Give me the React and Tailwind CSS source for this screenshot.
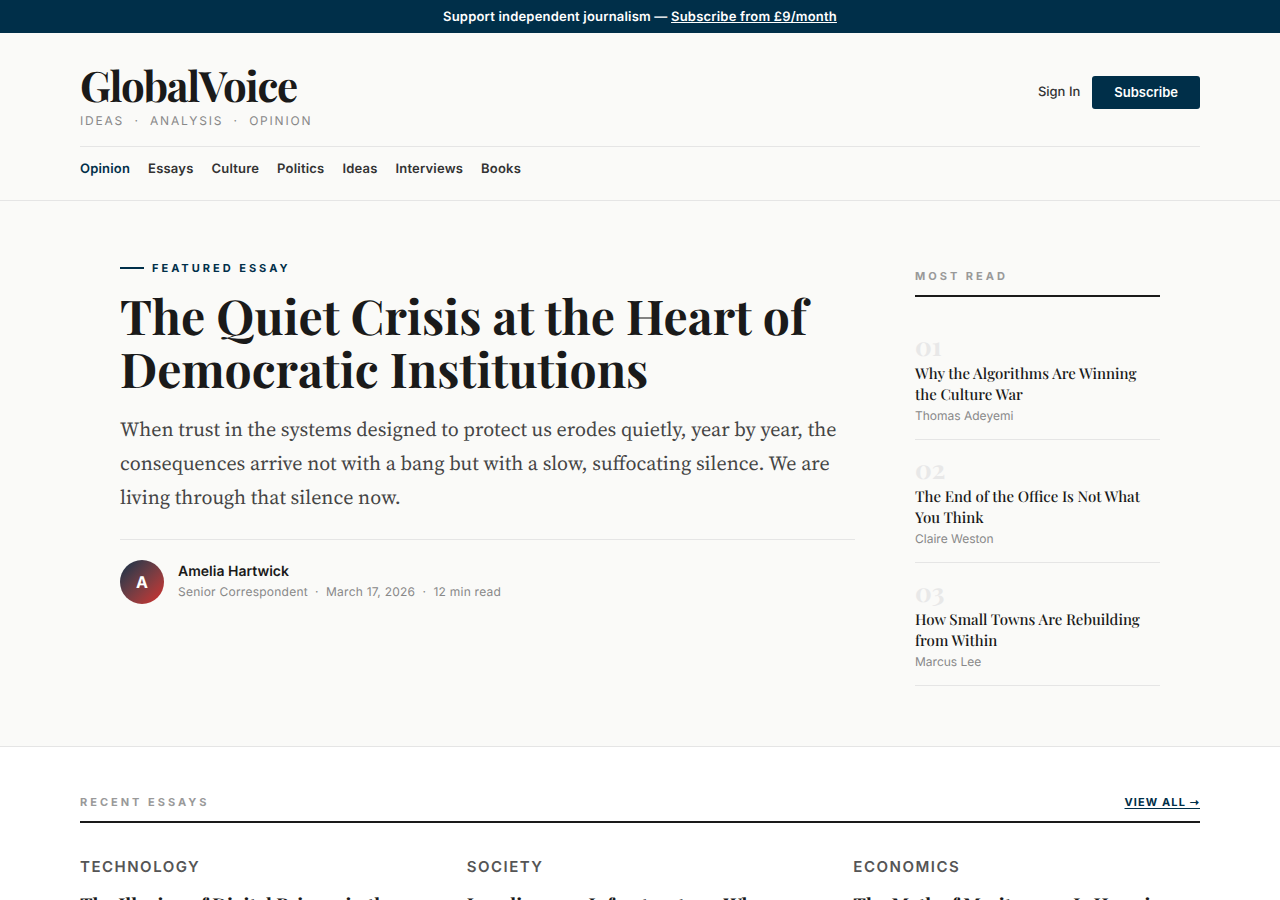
import React from "react";

const navLinks = [
  "Opinion",
  "Essays",
  "Culture",
  "Politics",
  "Ideas",
  "Interviews",
  "Books",
];

const mostRead = [
  {
    title: "Why the Algorithms Are Winning the Culture War",
    author: "Thomas Adeyemi",
  },
  {
    title: "The End of the Office Is Not What You Think",
    author: "Claire Weston",
  },
  {
    title: "How Small Towns Are Rebuilding from Within",
    author: "Marcus Lee",
  },
];

const essays = [
  {
    category: "Technology",
    title: "The Illusion of Digital Privacy in the",
  },
  {
    category: "Society",
    title: "Loneliness as Infrastructure: Who",
  },
  {
    category: "Economics",
    title: "The Myth of Meritocracy Is Harming",
  },
];

const TopBanner = () => (
  <div className="bg-[#002f49] px-5 pt-[9px] pb-[7px] text-center text-[13px] leading-[17px] font-semibold tracking-[0.015em] text-white">
    Support independent journalism —{" "}
    <a href="#subscribe" className="underline">
      Subscribe from £9/month
    </a>
  </div>
);

const Header = () => (
  <header className="border-b border-[#e5e5e5] px-20 pt-6">
    <div className="flex items-center justify-between border-b border-[#e5e5e5] pb-[18px]">
      <div>
        <a
          href="#home"
          className="block font-['Playfair_Display','Liberation_Serif',serif] text-[42px] leading-[56px] font-bold tracking-[-0.03em] text-[#1a1a1a]"
        >
          GlobalVoice
        </a>
        <p className="text-xs leading-[15px] tracking-[0.15em] text-[#888888] uppercase">
          Ideas &nbsp;·&nbsp; Analysis &nbsp;·&nbsp; Opinion
        </p>
      </div>
      <div className="flex items-center gap-3 text-[13px] leading-[17px]">
        <a href="#signin" className="font-medium text-[#333333]">
          Sign In
        </a>
        <button
          type="button"
          className="rounded-[3px] bg-[#002f49] px-[22px] py-2 font-semibold text-white"
        >
          Subscribe
        </button>
      </div>
    </div>
    <nav className="flex gap-[18px] pt-[13px] pb-[22px] text-[13px] leading-[18px] font-semibold tracking-[0.015em]">
      {navLinks.map((link, index) => (
        <a
          key={link}
          href={`#${link.toLowerCase()}`}
          className={index === 0 ? "text-[#002f49]" : "text-[#333333]"}
        >
          {link}
        </a>
      ))}
    </nav>
  </header>
);

const FeaturedEssay = () => (
  <article>
    <div className="flex items-center gap-2 text-[11px] leading-[14px] font-bold tracking-[3px] text-[#002f49] uppercase">
      <span className="h-[2px] w-6 bg-[#002f49]" />
      Featured Essay
    </div>
    <h1 className="mt-[15px] font-['Playfair_Display','Liberation_Serif',serif] text-[48px] leading-[53px] font-bold text-[#1a1a1a]">
      The Quiet Crisis at the Heart of Democratic Institutions
    </h1>
    <p className="mt-4 mb-[25px] font-['Source_Serif_4','Liberation_Serif',serif] text-[20px] leading-[34px] text-[#444444]">
      When trust in the systems designed to protect us erodes quietly, year by
      year, the consequences arrive not with a bang but with a slow, suffocating
      silence. We are living through that silence now.
    </p>
    <div className="flex items-center gap-[14px] border-t border-[#e5e5e5] pt-5">
      <div className="flex size-11 items-center justify-center rounded-full bg-linear-135 from-[#002f49] to-[#d62828] text-base font-bold text-white">
        A
      </div>
      <div>
        <p className="text-sm leading-5 font-semibold text-[#1a1a1a]">
          Amelia Hartwick
        </p>
        <p className="text-xs leading-5 tracking-[0.02em] text-[#888888]">
          Senior Correspondent &nbsp;·&nbsp; March 17, 2026 &nbsp;·&nbsp; 12 min
          read
        </p>
      </div>
    </div>
  </article>
);

const MostRead = () => (
  <aside className="pt-2">
    <h2 className="border-b-2 border-[#1a1a1a] pb-3 text-[11px] leading-[14px] font-bold tracking-[3px] text-[#999999] uppercase">
      Most Read
    </h2>
    <ol className="pt-5">
      {mostRead.map((item, index) => (
        <li key={item.author} className="border-b border-[#e5e5e5] py-4">
          <span className="mb-[5px] block font-['Playfair_Display','Liberation_Serif',serif] text-[26px] leading-[25px] font-bold text-[#e8e8e8]">
            0{index + 1}
          </span>
          <a
            href={`#most-read-${index + 1}`}
            className="block font-['Playfair_Display','Liberation_Serif',serif] text-[15px] leading-[21px] font-medium text-[#1a1a1a]"
          >
            {item.title}
          </a>
          <p className="mt-[3px] text-xs leading-[15px] text-[#888888]">
            {item.author}
          </p>
        </li>
      ))}
    </ol>
  </aside>
);

const RecentEssays = () => (
  <section className="bg-white px-20 pt-12 pb-4">
    <div className="flex items-center justify-between border-b-2 border-[#1a1a1a] pb-3 text-[11px] leading-[14px] uppercase">
      <h2 className="font-bold tracking-[3px] text-[#999999]">Recent Essays</h2>
      <a
        href="#all"
        className="font-bold tracking-[0.1em] text-[#002f49] underline underline-offset-2"
      >
        View All ➝
      </a>
    </div>
    <div className="grid grid-cols-3 gap-10 pt-8">
      {essays.map((essay) => (
        <article key={essay.category}>
          <p className="text-[15px] leading-6 font-semibold tracking-[0.1em] text-[#555555] uppercase">
            {essay.category}
          </p>
          <h3 className="mt-3 font-['Playfair_Display','Liberation_Serif',serif] text-[19px] leading-[27px] font-bold text-[#1a1a1a]">
            {essay.title}
          </h3>
        </article>
      ))}
    </div>
  </section>
);

const App = () => {
  return (
    <div className="min-h-screen bg-[#fafaf8] font-[Inter,sans-serif] [text-rendering:geometricPrecision]">
      <TopBanner />
      <Header />
      <main>
        <section className="border-b border-[#e5e5e5] px-[120px] py-[60px]">
          <div className="grid grid-cols-[3fr_1fr] gap-[60px]">
            <FeaturedEssay />
            <MostRead />
          </div>
        </section>
        <RecentEssays />
      </main>
    </div>
  );
};

export default App;
